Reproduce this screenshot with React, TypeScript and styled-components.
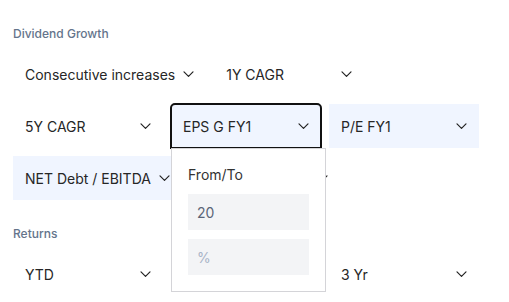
import React from 'react';
import styled, { createGlobalStyle } from 'styled-components';

const GlobalStyle = createGlobalStyle`
  body {
    margin: 0;
    background: #ffffff;
    font-family: Inter, 'Noto Sans', sans-serif;
  }
`;

const Page = styled.div`
  padding: 26px 13px 0;
`;

const Section = styled.section`
  & + & {
    margin-top: 26px;
  }
`;

const SectionLabel = styled.div`
  font-size: 12px;
  line-height: 16px;
  font-weight: 500;
  color: #64748b;
  margin-bottom: 9px;

  &:first-child {
    margin-bottom: 10px;
  }
`;

const Rows = styled.div`
  display: flex;
  flex-direction: column;
  gap: 8px;
`;

const Row = styled.div`
  display: flex;
  gap: 8px;
`;

const ChipWrap = styled.div`
  position: relative;
`;

const Chip = styled.div<{ $selected?: boolean; $open?: boolean }>`
  box-sizing: border-box;
  min-width: 150px;
  height: 44px;
  padding: 0 12px;
  display: flex;
  align-items: center;
  justify-content: space-between;
  gap: 8px;
  font-size: 14px;
  color: #262626;
  white-space: nowrap;
  background: ${p => (p.$selected ? '#f0f5ff' : 'transparent')};
  border-radius: ${p => (p.$open ? '4px 4px 0 0' : '0')};
  outline: ${p => (p.$open ? '2px solid #111111' : 'none')};
  outline-offset: -1px;
`;

const Chevron = () => (
  <svg width="11" height="6" viewBox="0 0 11 6" fill="none">
    <path d="M1 0.8l4.5 4.5 4.5-4.5" stroke="#222" strokeWidth="1.2" strokeLinecap="round" strokeLinejoin="round" />
  </svg>
);

const Popover = styled.div`
  position: absolute;
  top: 100%;
  left: 0;
  z-index: 10;
  box-sizing: border-box;
  width: 155px;
  padding: 16px;
  background: #ffffff;
  border: 1px solid #d4d4d8;
`;

const PopoverTitle = styled.div`
  font-size: 14px;
  line-height: 20px;
  color: #333333;
  margin-bottom: 9px;
`;

const Fields = styled.div`
  display: flex;
  flex-direction: column;
  gap: 9px;
`;

const Field = styled.input`
  box-sizing: border-box;
  width: 100%;
  height: 36px;
  padding: 0 9px;
  border: none;
  outline: none;
  background: #f3f4f6;
  font-family: inherit;
  font-size: 14px;
  color: #5b6578;

  &::placeholder {
    color: #a8b3c7;
  }
`;

interface FilterProps {
  label: string;
  selected?: boolean;
}

const Filter: React.FC<FilterProps> = ({ label, selected }) => (
  <Chip $selected={selected}>
    <span>{label}</span>
    <Chevron />
  </Chip>
);

export default function App() {
  return (
    <>
      <GlobalStyle />
      <Page>
        <Section>
          <SectionLabel>Dividend Growth</SectionLabel>
          <Rows>
            <Row>
              <Filter label="Consecutive increases" />
              <Filter label="1Y CAGR" />
            </Row>
            <Row>
              <Filter label="5Y CAGR" />
              <ChipWrap>
                <Chip $selected $open>
                  <span>EPS G FY1</span>
                  <Chevron />
                </Chip>
                <Popover>
                  <PopoverTitle>From/To</PopoverTitle>
                  <Fields>
                    <Field readOnly value="20" />
                    <Field readOnly placeholder="%" />
                  </Fields>
                </Popover>
              </ChipWrap>
              <Filter label="P/E FY1" selected />
            </Row>
            <Row>
              <Filter label="NET Debt / EBITDA" selected />
              <Filter label="Payout ratio" />
            </Row>
          </Rows>
        </Section>
        <Section>
          <SectionLabel>Returns</SectionLabel>
          <Rows>
            <Row>
              <Filter label="YTD" />
              <Filter label="1 Yr" />
              <Filter label="3 Yr" />
            </Row>
          </Rows>
        </Section>
      </Page>
    </>
  );
}
